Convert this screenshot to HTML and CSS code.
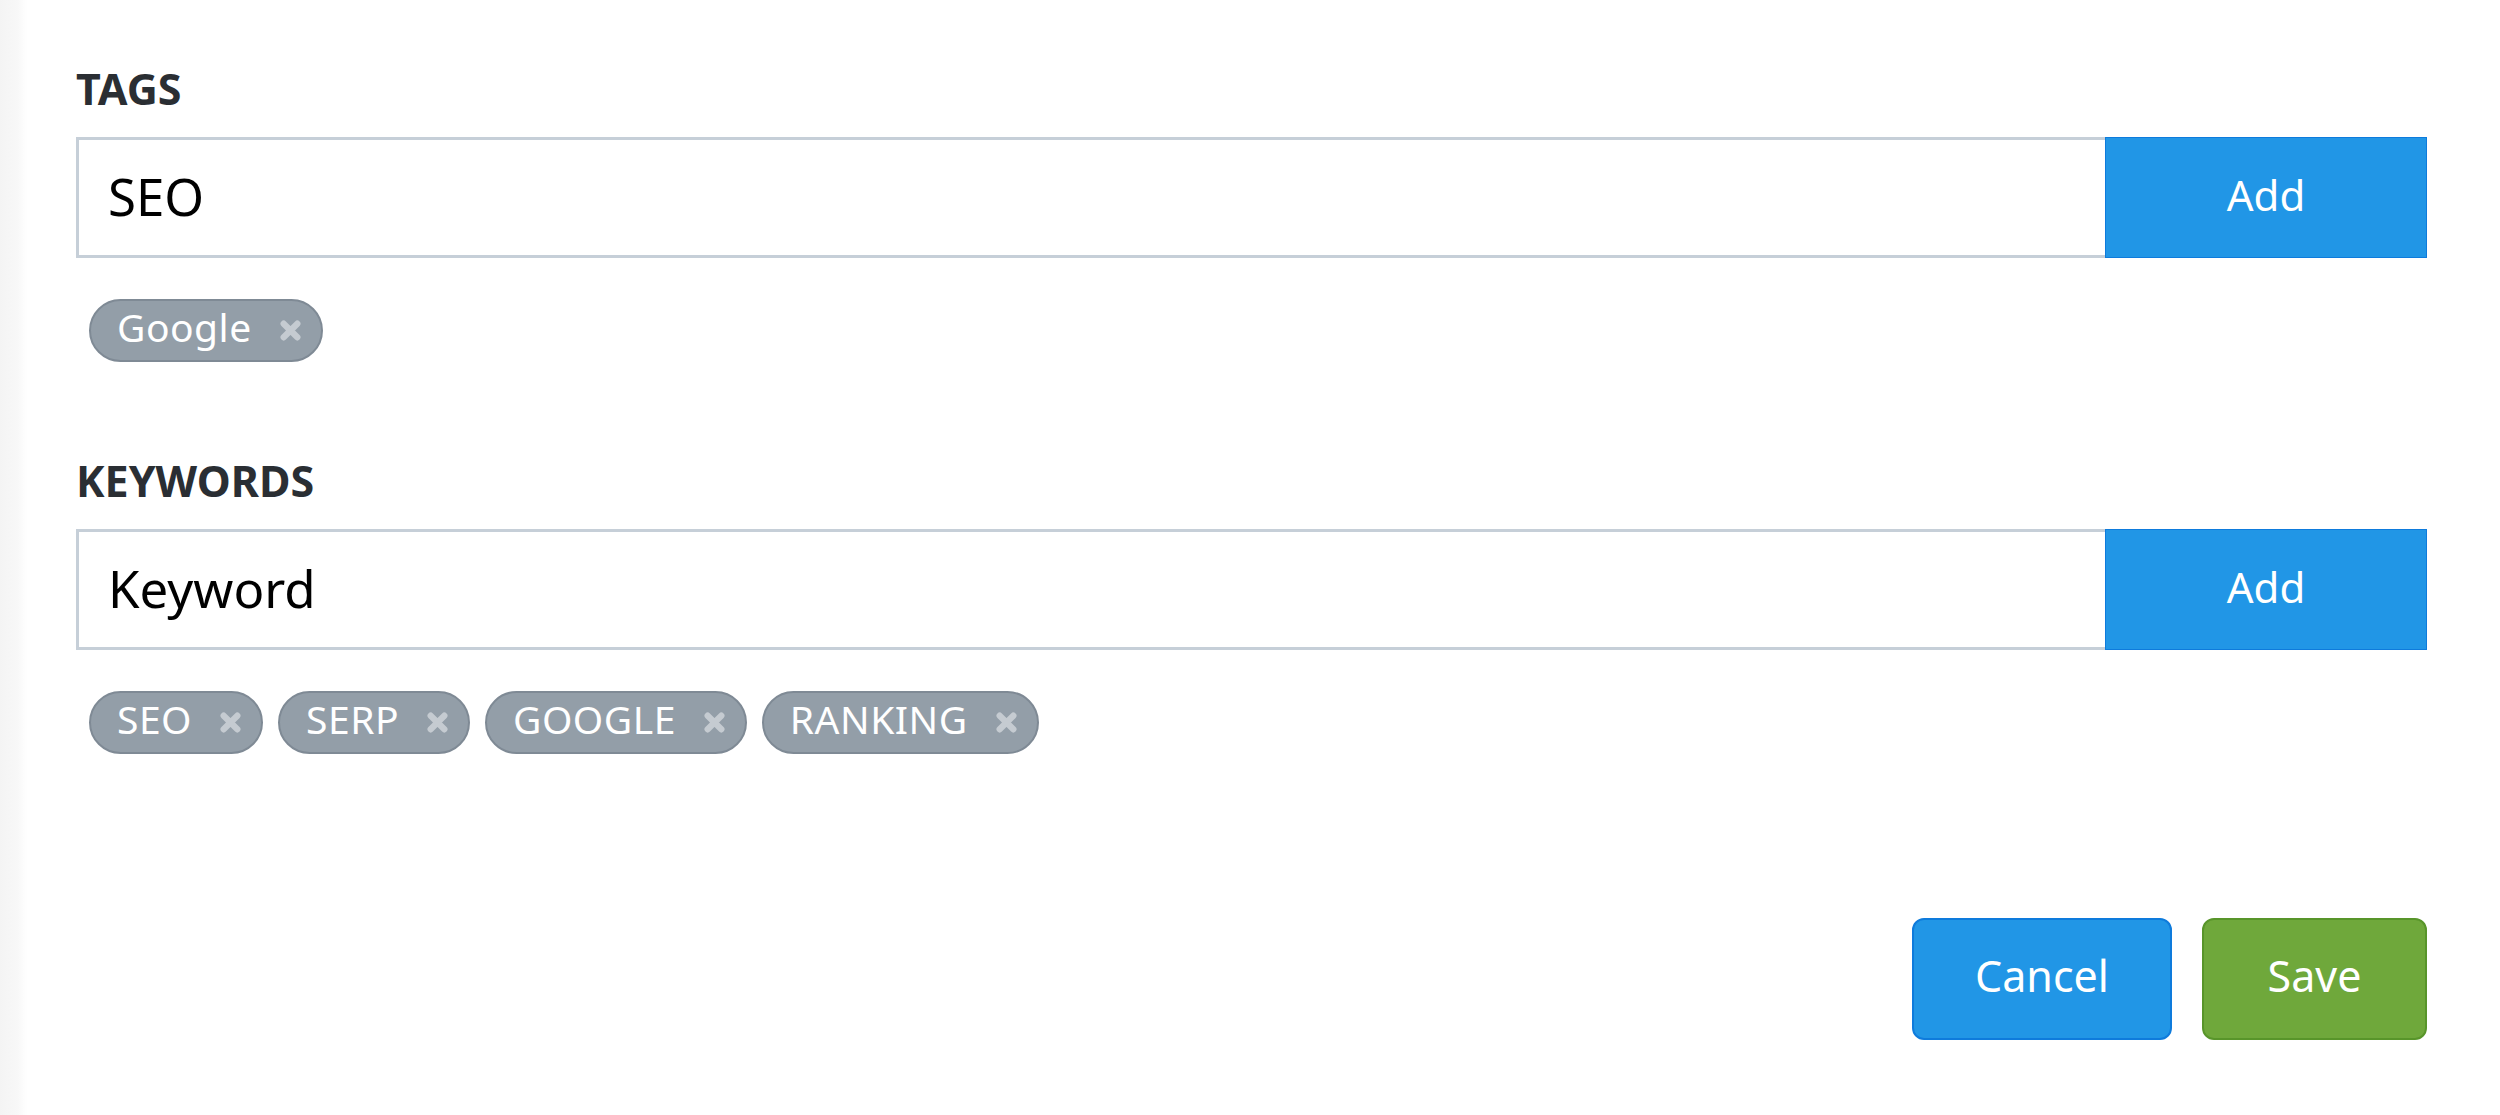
FILE: index.html
```html
<!DOCTYPE html>
<html lang="en">
<head>
<meta charset="utf-8">
<title>Tags and Keywords</title>
<link rel="stylesheet" href="styles.css">
</head>
<body>
<div class="page">
  <section class="section">
    <div class="label">TAGS</div>
    <div class="input-row">
      <div class="field">SEO</div>
      <button class="add-btn">Add</button>
    </div>
    <div class="chips">
      <span class="chip">Google<svg class="x" viewBox="0 0 20 20"><path d="M3.5 3.5 L16.5 16.5 M16.5 3.5 L3.5 16.5"/></svg></span>
    </div>
  </section>
  <section class="section second">
    <div class="label">KEYWORDS</div>
    <div class="input-row">
      <div class="field">Keyword</div>
      <button class="add-btn">Add</button>
    </div>
    <div class="chips">
      <span class="chip">SEO<svg class="x" viewBox="0 0 20 20"><path d="M3.5 3.5 L16.5 16.5 M16.5 3.5 L3.5 16.5"/></svg></span>
      <span class="chip">SERP<svg class="x" viewBox="0 0 20 20"><path d="M3.5 3.5 L16.5 16.5 M16.5 3.5 L3.5 16.5"/></svg></span>
      <span class="chip">GOOGLE<svg class="x" viewBox="0 0 20 20"><path d="M3.5 3.5 L16.5 16.5 M16.5 3.5 L3.5 16.5"/></svg></span>
      <span class="chip">RANKING<svg class="x" viewBox="0 0 20 20"><path d="M3.5 3.5 L16.5 16.5 M16.5 3.5 L3.5 16.5"/></svg></span>
    </div>
  </section>
  <div class="actions">
    <button class="btn cancel">Cancel</button>
    <button class="btn save">Save</button>
  </div>
</div>
</body>
</html>
```
FILE: styles.css
```css
html, body {
  margin: 0;
  padding: 0;
}
body {
  background: linear-gradient(90deg, #f4f4f4 0, #f8f8f8 18px, #fdfdfd 24px, #ffffff 28px);
  font-family: "Noto Sans", "Open Sans", sans-serif;
  min-height: 1115px;
}
.page {
  padding: 60px 73px 0 76px;
}
.label {
  font-size: 43px;
  line-height: 58px;
  font-weight: 700;
  color: #2a2e33;
  margin-bottom: 19px;
}
.second {
  margin-top: 90px;
}
.input-row {
  display: flex;
  height: 121px;
}
.field {
  flex: 1;
  box-sizing: border-box;
  border: 3px solid #c6cfd8;
  border-right: none;
  display: flex;
  align-items: center;
  padding-left: 29px;
  padding-bottom: 2px;
  font-size: 51px;
  line-height: 1;
  color: #000;
  background: #fff;
}
.add-btn {
  width: 322px;
  box-sizing: border-box;
  border: 1px solid #0e7bdc;
  background: #2196e6;
  color: #fff;
  font-family: "Noto Sans", "Open Sans", sans-serif;
  font-size: 42px;
  padding: 0 0 6px 0;
  margin: 0;
}
.chips {
  display: flex;
  gap: 15px;
  margin-top: 41px;
  padding-left: 13px;
}
.chip {
  box-sizing: border-box;
  height: 63px;
  display: inline-flex;
  align-items: center;
  padding: 0 20px 8px 26px;
  border: 2px solid #7f8a95;
  border-radius: 32px;
  background: #939ea8;
  color: #fff;
  font-size: 39px;
  letter-spacing: 0.5px;
  line-height: 1;
}
.x {
  width: 21px;
  height: 21px;
  margin-left: 28px;
  margin-top: 8px;
  fill: none;
  stroke: #c5cbd1;
  stroke-width: 6;
  stroke-linecap: round;
}
.actions {
  display: flex;
  justify-content: flex-end;
  gap: 30px;
  margin-top: 164px;
}
.btn {
  height: 122px;
  box-sizing: border-box;
  border-radius: 12px;
  color: #fff;
  font-family: "Noto Sans", "Open Sans", sans-serif;
  font-size: 43px;
  padding: 0 0 7px 0;
}
.cancel {
  width: 260px;
  background: #2196e6;
  border: 2px solid #0e7bdc;
}
.save {
  width: 225px;
  background: #6fa83b;
  border: 2px solid #58952a;
}
```
